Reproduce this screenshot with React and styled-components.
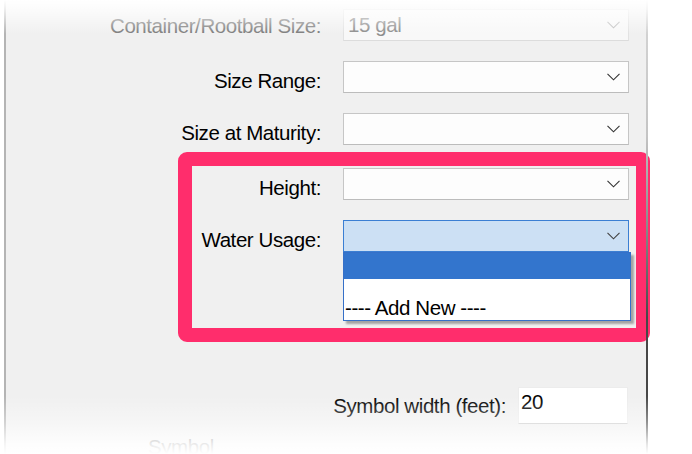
import React from "react";
import styled, { createGlobalStyle } from "styled-components";

const Global = createGlobalStyle`
  html, body { margin: 0; padding: 0; background: #ffffff; }
  body { font-family: "Liberation Sans", Arial, sans-serif; }
`;

const Page = styled.div`
  position: relative;
  width: 692px;
  height: 454px;
  overflow: hidden;
  background: #ffffff;
  display: flex;
  padding-left: 4px;
  box-sizing: border-box;
`;

const Window = styled.div`
  width: 644px;
  height: 100%;
  box-sizing: border-box;
  background: #f0f0f0;
  border-left: 2px solid #b4b4b4;
  border-right: 2px solid transparent;
  position: relative;
  display: flex;
  flex-direction: column;
  padding-top: 9px;
`;

const RightEdge = styled.div`
  position: absolute;
  top: 0;
  right: -2px;
  width: 2px;
  height: 100%;
  background: linear-gradient(
    to bottom,
    #d6d6d6 0%,
    #c4c4c4 30%,
    #8a8a8a 50%,
    #474747 70%,
    #474747 100%
  );
`;

const Rows = styled.div`
  display: flex;
  flex-direction: column;
  gap: 20px;
  padding-right: ${(p) => p.$right}px;
`;

const Row = styled.div`
  display: flex;
  justify-content: flex-end;
  align-items: center;
  gap: ${(p) => p.$gap ?? 22}px;
`;

const Label = styled.span`
  font-size: 20.5px;
  letter-spacing: -0.42px;
  padding-top: ${(p) => p.$drop ?? 7}px;
  color: ${(p) => (p.$disabled ? "#7c7c7c" : "#000000")};
  white-space: nowrap;
`;

const Combo = styled.div`
  position: relative;
  width: 286px;
  height: 32px;
  box-sizing: border-box;
  display: flex;
  align-items: center;
  justify-content: space-between;
  padding: 0 8px 0 4px;
  font-size: 20.5px;
  letter-spacing: -0.42px;
  color: ${(p) => (p.$disabled ? "#8c8c8c" : "#000")};
  background: ${(p) =>
    p.$active ? "#cce0f4" : p.$disabled ? "#f8f8f8" : "#fdfdfd"};
  border: 1px solid
    ${(p) => (p.$active ? "#3b7fd3" : p.$disabled ? "#e2e2e2" : "#c6c6c6")};
  border-bottom-color: ${(p) =>
    p.$active ? "#3b7fd3" : p.$disabled ? "#dcdcdc" : "#bcbcbc"};
`;

const Chevron = ({ color }) => (
  <svg width="13" height="8" viewBox="0 0 13 8" fill="none">
    <path d="M0.5 0.8 L6.5 6.8 L12.5 0.8" stroke={color} strokeWidth="1.1" />
  </svg>
);

const Highlight = styled.div`
  margin: 7px -4px 0 172px;
  border: 14px solid #ff2d6c;
  border-radius: 9px;
  background: #f0f0f0;
  padding: 2px 7px 76px 0;
  display: flex;
  flex-direction: column;
  gap: 20px;
`;

const List = styled.div`
  position: absolute;
  left: -1px;
  top: 31px;
  width: 288px;
  box-sizing: border-box;
  background: #ffffff;
  border: 1px solid #3670c8;
  box-shadow: 3px 3px 2px rgba(0, 0, 0, 0.32);
  display: flex;
  flex-direction: column;
  z-index: 2;
`;

const Item = styled.div`
  height: ${(p) => p.$h}px;
  line-height: ${(p) => p.$h}px;
  background: ${(p) => (p.$selected ? "#3375cd" : "#ffffff")};
  font-size: 20.5px;
  letter-spacing: -0.42px;
  color: #000;
  padding-left: 1px;
  white-space: nowrap;
`;

const SymbolRow = styled(Row)`
  margin-top: 45px;
  padding-right: 18px;
`;

const TextInput = styled.div`
  width: 110px;
  height: 37px;
  box-sizing: border-box;
  background: #ffffff;
  border: 1px solid #ececec;
  border-bottom-color: #c9c9c9;
  font-size: 20.5px;
  letter-spacing: -0.42px;
  color: #000;
  padding: 2px 0 0 2px;
`;

const FadedLabel = styled.div`
  margin: 11px 0 0 142px;
  font-size: 20.5px;
  line-height: 24px;
  letter-spacing: -0.42px;
  color: #6a6a6a;
`;

const Fade = styled.div`
  position: absolute;
  left: 0;
  right: 0;
  pointer-events: none;
  z-index: 5;
  ${(p) =>
    p.$top
      ? `top: 0; height: 34px; background: linear-gradient(to bottom, rgba(255,255,255,1) 0%, rgba(255,255,255,0.75) 30%, rgba(255,255,255,0) 100%);`
      : `bottom: 0; height: 58px; background: linear-gradient(to top, rgba(255,255,255,1) 0%, rgba(255,255,255,0.85) 18%, rgba(255,255,255,0.4) 55%, rgba(255,255,255,0) 100%);`}
`;

export default function App() {
  return (
    <>
      <Global />
      <Page>
        <Window>
          <RightEdge />
          <Rows $right={17}>
            <Row>
              <Label $disabled $drop={2}>Container/Rootball Size:</Label>
              <Combo $disabled>
                <span>15 gal</span>
                <Chevron color="#bdbdbd" />
              </Combo>
            </Row>
            <Row>
              <Label>Size Range:</Label>
              <Combo>
                <span />
                <Chevron color="#333" />
              </Combo>
            </Row>
            <Row>
              <Label>Size at Maturity:</Label>
              <Combo>
                <span />
                <Chevron color="#333" />
              </Combo>
            </Row>
          </Rows>
          <Highlight>
            <Row>
              <Label>Height:</Label>
              <Combo>
                <span />
                <Chevron color="#333" />
              </Combo>
            </Row>
            <Row>
              <Label>Water Usage:</Label>
              <Combo $active>
                <span />
                <Chevron color="#404040" />
                <List>
                  <Item $selected $h={26} />
                  <Item $h={17} />
                  <Item $h={24}>---- Add New ----</Item>
                </List>
              </Combo>
            </Row>
          </Highlight>
          <SymbolRow $gap={12}>
            <Label $drop={0}>Symbol width (feet):</Label>
            <TextInput>20</TextInput>
          </SymbolRow>
          <FadedLabel>Symbol</FadedLabel>
        </Window>
        <Fade $top />
        <Fade />
      </Page>
    </>
  );
}
